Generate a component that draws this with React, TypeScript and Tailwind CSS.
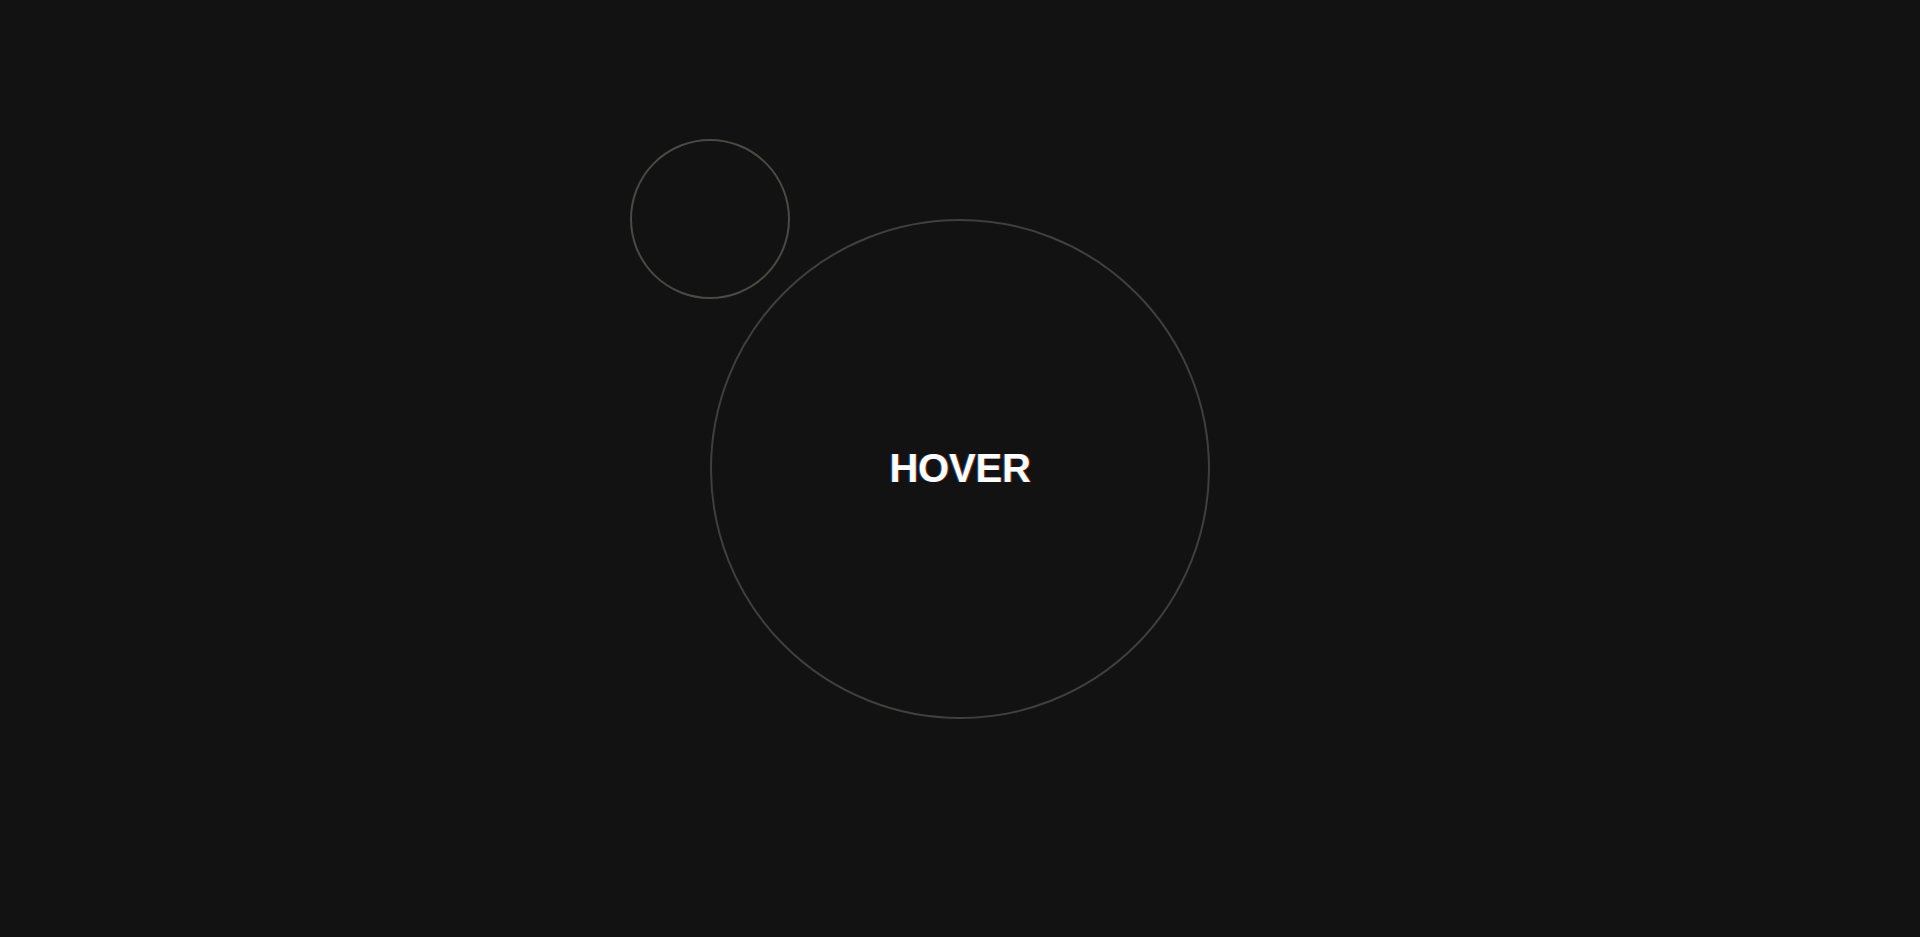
import React from "react";

export default function App() {
  return (
    <div className="relative w-full h-[937px] bg-[#121212] overflow-hidden flex items-center justify-center" style={{ fontFamily: '"Liberation Sans", Arial, sans-serif' }}>
      <div className="relative w-[500px] h-[500px] rounded-full border-2 border-[#3f3f3e] flex items-center justify-center">
        <span className="-mt-[2px] text-[40px] font-bold text-white leading-none tracking-[-0.2px] [text-shadow:-1px_0_rgba(0,120,255,0.55),1px_0_rgba(255,60,0,0.55)]">
          HOVER
        </span>
        <div className="absolute -left-[82px] -top-[82px] w-[160px] h-[160px] rounded-full border-2 border-[#4a4a45]" />
      </div>
    </div>
  );
}
